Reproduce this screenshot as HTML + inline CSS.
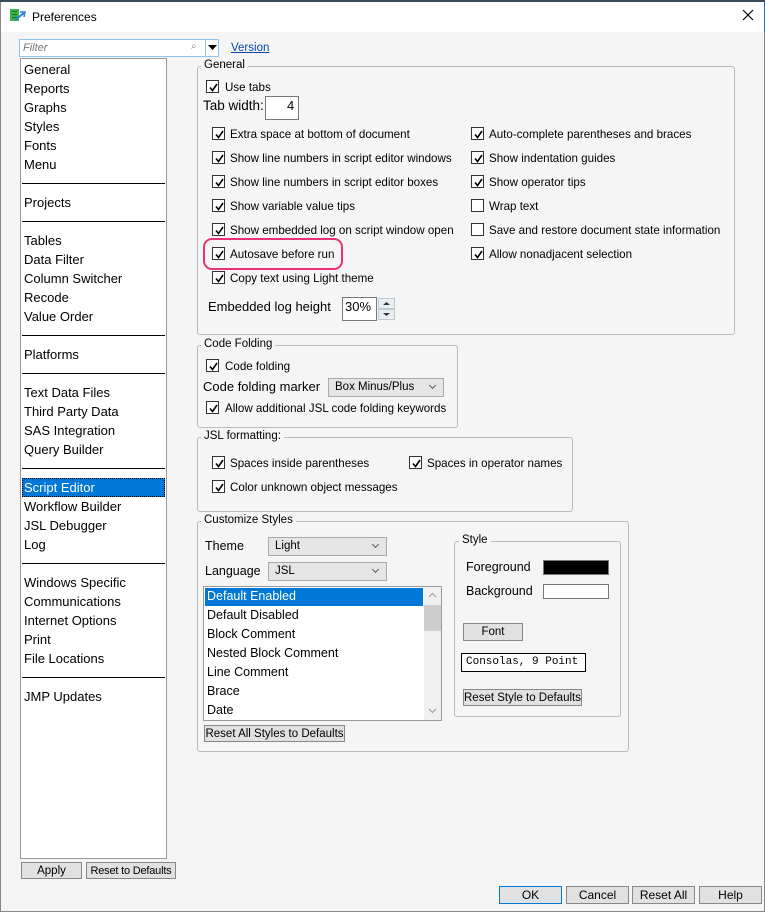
<!DOCTYPE html>
<html><head><meta charset="utf-8">
<style>
*{box-sizing:border-box;margin:0;padding:0}
body{width:765px;height:912px;overflow:hidden;background:#f5f5f5;font-family:"Liberation Sans",sans-serif;font-size:11px;color:#000;position:relative}
.a{position:absolute;white-space:nowrap}
.t{position:absolute;white-space:nowrap;line-height:14px}
.c{font-size:11.6px;margin-top:1px}
.cb{position:absolute;width:13px;height:13px;border:1px solid #333;background:#fff}
.cb svg{position:absolute;left:1px;top:1px}
.grp{position:absolute;border:1px solid #bbb;border-radius:3px}
.gt{position:absolute;background:#f5f5f5;padding:0 3px;line-height:13px;font-size:11.5px;white-space:nowrap}
.btn{position:absolute;background:#e1e1e1;border:1px solid #888;text-align:center;font-size:11.5px;line-height:16px;white-space:nowrap;overflow:hidden}
.sel{position:absolute;background:#e5e5e5;border:1px solid #aaa;font-size:11.5px;line-height:17px;padding-left:6px}
.sel:after{content:"";position:absolute;right:8px;top:4px;width:4px;height:4px;border-right:1px solid #555;border-bottom:1px solid #555;transform:rotate(45deg)}
.li{position:absolute;left:4px;font-size:13px;line-height:19px}
.sep{position:absolute;left:22px;width:143px;height:1px;background:#000}
</style></head><body>
<div class="a" style="left:0;top:0;width:765px;height:32px;background:#fff;border-left:1px solid #888;border-right:1px solid #2a6fb8"></div>
<div class="a" style="left:0;top:0;width:765px;height:2px;background:#3a4a5a"></div>
<svg class="a" style="left:10px;top:9px" width="16" height="14"><rect x="0" y="0" width="9" height="12" fill="#3bb54a"/><rect x="2" y="2" width="5" height="1" fill="#1b6b24"/><rect x="2" y="5" width="5" height="1" fill="#1b6b24"/><rect x="2" y="8" width="5" height="1" fill="#1b6b24"/><path d="M5 11 L14 4" stroke="#2a7fd4" stroke-width="2"/><path d="M10 3 L15 3 L14 8" fill="none" stroke="#2a7fd4" stroke-width="1.5"/></svg>
<div class="t" style="left:32px;top:10px;font-size:12px">Preferences</div>
<svg class="a" style="left:742px;top:9px" width="12" height="12"><path d="M1 1L11 11M11 1L1 11" stroke="#000" stroke-width="1.2"/></svg>
<div class="a" style="left:0;top:32px;width:1px;height:880px;background:#888"></div>
<div class="a" style="left:764px;top:32px;width:1px;height:880px;background:#888"></div>
<div class="a" style="left:0;top:911px;width:765px;height:1px;background:#888"></div>

<div class="a" style="left:19px;top:39px;width:200px;height:18px;border:1px solid #8cc6ec;background:#fff"></div>
<div class="t" style="left:23px;top:41px;color:#777;font-style:italic">Filter</div>
<div class="t" style="left:191px;top:40px;color:#888;font-size:10px">&#x2315;</div>
<div class="a" style="left:205px;top:39px;width:1px;height:18px;background:#8cc6ec"></div>
<svg class="a" style="left:208px;top:45px" width="9" height="6"><path d="M0 0H9L4.5 5Z" fill="#000"/></svg>
<div class="t" style="left:231px;top:41px;color:#0645ad;text-decoration:underline;font-size:11.5px">Version</div>

<div class="a" style="left:20px;top:58px;width:147px;height:801px;background:#fff;border:1px solid #999"></div>
<div class="a" style="left:20px;top:58px;width:147px;height:720px">
<div class="li" style="top:2px">General</div>
<div class="li" style="top:21px">Reports</div>
<div class="li" style="top:40px">Graphs</div>
<div class="li" style="top:59px">Styles</div>
<div class="li" style="top:78px">Fonts</div>
<div class="li" style="top:97px">Menu</div>
<div class="li" style="top:135px">Projects</div>
<div class="li" style="top:173px">Tables</div>
<div class="li" style="top:192px">Data Filter</div>
<div class="li" style="top:211px">Column Switcher</div>
<div class="li" style="top:230px">Recode</div>
<div class="li" style="top:249px">Value Order</div>
<div class="li" style="top:287px">Platforms</div>
<div class="li" style="top:325px">Text Data Files</div>
<div class="li" style="top:344px">Third Party Data</div>
<div class="li" style="top:363px">SAS Integration</div>
<div class="li" style="top:382px">Query Builder</div>
<div class="a" style="left:2px;top:420px;width:143px;height:19px;background:#0078d7;border:1px dotted #000"></div>
<div class="li" style="top:420px;color:#fff">Script Editor</div>
<div class="li" style="top:439px">Workflow Builder</div>
<div class="li" style="top:458px">JSL Debugger</div>
<div class="li" style="top:477px">Log</div>
<div class="li" style="top:515px">Windows Specific</div>
<div class="li" style="top:534px">Communications</div>
<div class="li" style="top:553px">Internet Options</div>
<div class="li" style="top:572px">Print</div>
<div class="li" style="top:591px">File Locations</div>
<div class="li" style="top:629px">JMP Updates</div>
</div>
<div class="sep" style="top:183px"></div>
<div class="sep" style="top:221px"></div>
<div class="sep" style="top:335px"></div>
<div class="sep" style="top:373px"></div>
<div class="sep" style="top:468px"></div>
<div class="sep" style="top:563px"></div>
<div class="sep" style="top:677px"></div>

<div class="btn" style="left:21px;top:862px;width:61px;height:17px">Apply</div>
<div class="btn" style="left:86px;top:862px;width:90px;height:17px;font-size:11px;letter-spacing:-0.2px">Reset to Defaults</div>

<div class="grp" style="left:197px;top:66px;width:538px;height:269px"></div>
<div class="gt" style="left:201px;top:59px">General</div>
<div class="cb" style="left:206px;top:80px"><svg width="11" height="11"><path d="M2 5.5L4.5 8.5L9 2" fill="none" stroke="#000" stroke-width="1.6"/></svg></div>
<div class="t c" style="left:225px;top:80px">Use tabs</div>
<div class="t" style="left:203px;top:99px;font-size:13.5px">Tab width:</div>
<div class="a" style="left:265px;top:96px;width:34px;height:24px;background:#fff;border:1px solid #777"></div>
<div class="t" style="left:287px;top:99px;font-size:13px">4</div>

<div class="cb" style="left:212px;top:127px"><svg width="11" height="11"><path d="M2 5.5L4.5 8.5L9 2" fill="none" stroke="#000" stroke-width="1.6"/></svg></div>
<div class="t c" style="left:230px;top:127px">Extra space at bottom of document</div>
<div class="cb" style="left:212px;top:151px"><svg width="11" height="11"><path d="M2 5.5L4.5 8.5L9 2" fill="none" stroke="#000" stroke-width="1.6"/></svg></div>
<div class="t c" style="left:230px;top:151px">Show line numbers in script editor windows</div>
<div class="cb" style="left:212px;top:175px"><svg width="11" height="11"><path d="M2 5.5L4.5 8.5L9 2" fill="none" stroke="#000" stroke-width="1.6"/></svg></div>
<div class="t c" style="left:230px;top:175px">Show line numbers in script editor boxes</div>
<div class="cb" style="left:212px;top:199px"><svg width="11" height="11"><path d="M2 5.5L4.5 8.5L9 2" fill="none" stroke="#000" stroke-width="1.6"/></svg></div>
<div class="t c" style="left:230px;top:199px">Show variable value tips</div>
<div class="cb" style="left:212px;top:223px"><svg width="11" height="11"><path d="M2 5.5L4.5 8.5L9 2" fill="none" stroke="#000" stroke-width="1.6"/></svg></div>
<div class="t c" style="left:230px;top:223px">Show embedded log on script window open</div>
<div class="cb" style="left:212px;top:247px"><svg width="11" height="11"><path d="M2 5.5L4.5 8.5L9 2" fill="none" stroke="#000" stroke-width="1.6"/></svg></div>
<div class="t c" style="left:230px;top:247px">Autosave before run</div>
<div class="a" style="left:203px;top:238px;width:140px;height:32px;border:2px solid #e8337a;border-radius:9px"></div>
<div class="cb" style="left:212px;top:271px"><svg width="11" height="11"><path d="M2 5.5L4.5 8.5L9 2" fill="none" stroke="#000" stroke-width="1.6"/></svg></div>
<div class="t c" style="left:230px;top:271px">Copy text using Light theme</div>
<div class="t" style="left:208px;top:300px;font-size:13px">Embedded log height</div>
<div class="a" style="left:342px;top:297px;width:35px;height:24px;background:#fff;border:1px solid #777"></div>
<div class="t" style="left:345px;top:300px;font-size:13px">30%</div>
<div class="a" style="left:378px;top:298px;width:17px;height:11px;background:#e8eef4;border:1px solid #bcc"></div>
<div class="a" style="left:378px;top:309px;width:17px;height:11px;background:#e8eef4;border:1px solid #bcc"></div>
<svg class="a" style="left:383px;top:301px" width="7" height="16"><path d="M0 4L3.5 1L7 4Z M0 12L3.5 15L7 12Z" fill="#333"/></svg>

<div class="cb" style="left:471px;top:127px"><svg width="11" height="11"><path d="M2 5.5L4.5 8.5L9 2" fill="none" stroke="#000" stroke-width="1.6"/></svg></div>
<div class="t c" style="left:489px;top:127px">Auto-complete parentheses and braces</div>
<div class="cb" style="left:471px;top:151px"><svg width="11" height="11"><path d="M2 5.5L4.5 8.5L9 2" fill="none" stroke="#000" stroke-width="1.6"/></svg></div>
<div class="t c" style="left:489px;top:151px">Show indentation guides</div>
<div class="cb" style="left:471px;top:175px"><svg width="11" height="11"><path d="M2 5.5L4.5 8.5L9 2" fill="none" stroke="#000" stroke-width="1.6"/></svg></div>
<div class="t c" style="left:489px;top:175px">Show operator tips</div>
<div class="cb" style="left:471px;top:199px"></div>
<div class="t c" style="left:489px;top:199px">Wrap text</div>
<div class="cb" style="left:471px;top:223px"></div>
<div class="t c" style="left:489px;top:223px">Save and restore document state information</div>
<div class="cb" style="left:471px;top:247px"><svg width="11" height="11"><path d="M2 5.5L4.5 8.5L9 2" fill="none" stroke="#000" stroke-width="1.6"/></svg></div>
<div class="t c" style="left:489px;top:247px">Allow nonadjacent selection</div>

<div class="grp" style="left:197px;top:345px;width:261px;height:83px"></div>
<div class="gt" style="left:201px;top:338px">Code Folding</div>
<div class="cb" style="left:206px;top:359px"><svg width="11" height="11"><path d="M2 5.5L4.5 8.5L9 2" fill="none" stroke="#000" stroke-width="1.6"/></svg></div>
<div class="t c" style="left:225px;top:359px">Code folding</div>
<div class="t" style="left:203px;top:380px;font-size:13px">Code folding marker</div>
<div class="sel" style="left:328px;top:378px;width:116px;height:19px">Box Minus/Plus</div>
<div class="cb" style="left:206px;top:401px"><svg width="11" height="11"><path d="M2 5.5L4.5 8.5L9 2" fill="none" stroke="#000" stroke-width="1.6"/></svg></div>
<div class="t c" style="left:225px;top:401px">Allow additional JSL code folding keywords</div>

<div class="grp" style="left:197px;top:437px;width:376px;height:75px"></div>
<div class="gt" style="left:201px;top:430px">JSL formatting:</div>
<div class="cb" style="left:212px;top:456px"><svg width="11" height="11"><path d="M2 5.5L4.5 8.5L9 2" fill="none" stroke="#000" stroke-width="1.6"/></svg></div>
<div class="t c" style="left:230px;top:456px">Spaces inside parentheses</div>
<div class="cb" style="left:409px;top:456px"><svg width="11" height="11"><path d="M2 5.5L4.5 8.5L9 2" fill="none" stroke="#000" stroke-width="1.6"/></svg></div>
<div class="t c" style="left:427px;top:456px">Spaces in operator names</div>
<div class="cb" style="left:212px;top:480px"><svg width="11" height="11"><path d="M2 5.5L4.5 8.5L9 2" fill="none" stroke="#000" stroke-width="1.6"/></svg></div>
<div class="t c" style="left:230px;top:480px">Color unknown object messages</div>

<div class="grp" style="left:197px;top:521px;width:432px;height:231px"></div>
<div class="gt" style="left:201px;top:514px">Customize Styles</div>
<div class="t" style="left:205px;top:539px;font-size:12.5px">Theme</div>
<div class="sel" style="left:268px;top:537px;width:119px;height:19px">Light</div>
<div class="t" style="left:205px;top:564px;font-size:12.5px">Language</div>
<div class="sel" style="left:268px;top:562px;width:119px;height:19px">JSL</div>
<div class="a" style="left:203px;top:586px;width:239px;height:135px;background:#fff;border:1px solid #999;overflow:hidden">
<div class="a" style="left:1px;top:1px;width:218px;height:18px;background:#0078d7"></div>
<div class="li" style="left:3px;top:0;color:#fff;font-size:12.5px">Default Enabled</div>
<div class="li" style="left:3px;top:19px;font-size:12.5px">Default Disabled</div>
<div class="li" style="left:3px;top:38px;font-size:12.5px">Block Comment</div>
<div class="li" style="left:3px;top:57px;font-size:12.5px">Nested Block Comment</div>
<div class="li" style="left:3px;top:76px;font-size:12.5px">Line Comment</div>
<div class="li" style="left:3px;top:95px;font-size:12.5px">Brace</div>
<div class="li" style="left:3px;top:114px;font-size:12.5px">Date</div>
<div class="a" style="left:220px;top:0;width:17px;height:133px;background:#f0f0f0"></div>
<div class="a" style="left:220px;top:18px;width:17px;height:26px;background:#cdcdcd"></div>
<svg class="a" style="left:224px;top:5px" width="9" height="6"><path d="M1 5L4.5 1.5L8 5" fill="none" stroke="#999"/></svg>
<svg class="a" style="left:224px;top:121px" width="9" height="6"><path d="M1 1L4.5 4.5L8 1" fill="none" stroke="#999"/></svg>
</div>
<div class="btn" style="left:204px;top:725px;width:141px;height:17px">Reset All Styles to Defaults</div>

<div class="grp" style="left:454px;top:541px;width:167px;height:176px"></div>
<div class="gt" style="left:459px;top:534px">Style</div>
<div class="t" style="left:466px;top:560px;font-size:12.5px">Foreground</div>
<div class="a" style="left:543px;top:560px;width:66px;height:15px;background:#000;border:1px solid #777"></div>
<div class="t" style="left:466px;top:584px;font-size:12.5px">Background</div>
<div class="a" style="left:543px;top:584px;width:66px;height:15px;background:#fff;border:1px solid #777"></div>
<div class="btn" style="left:463px;top:623px;width:60px;height:18px">Font</div>
<div class="a" style="left:461px;top:653px;width:125px;height:19px;background:#fff;border:1px solid #000;font-family:'Liberation Mono',monospace;font-size:11px;line-height:17px;padding-left:4px">Consolas, 9 Point</div>
<div class="btn" style="left:463px;top:689px;width:119px;height:17px">Reset Style to Defaults</div>

<div class="btn" style="left:499px;top:886px;width:63px;height:18px;border-color:#0078d7;font-size:12px">OK</div>
<div class="btn" style="left:566px;top:886px;width:63px;height:18px;font-size:12px">Cancel</div>
<div class="btn" style="left:632px;top:886px;width:63px;height:18px;font-size:12px">Reset All</div>
<div class="btn" style="left:699px;top:886px;width:63px;height:18px;font-size:12px">Help</div>
</body></html>
